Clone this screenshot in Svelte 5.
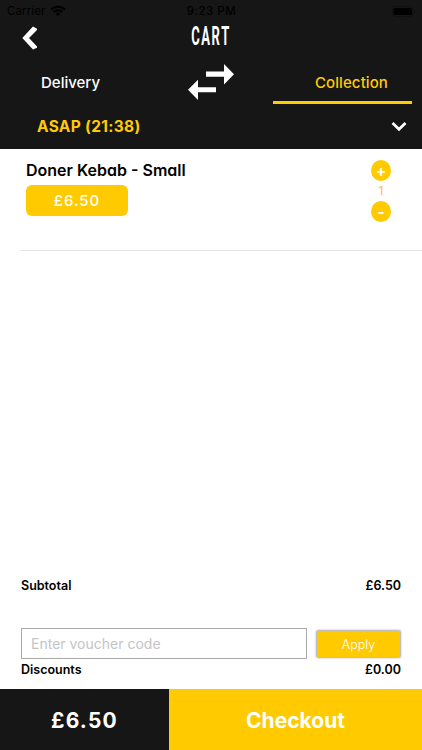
<script>
  let mode = 'collection'
  let voucher = ''
  let item = { title: 'Doner Kebab - Small', price: 6.5, quantity: 1 }

  function format(value) {
    return '£' + value.toFixed(2)
  }

  function remove() {
    if (item.quantity > 1) item.quantity -= 1
  }

  $: subtotal = item.price * item.quantity
</script>

<div class="screen">
  <header>
    <div class="status">
      <div class="carrier">
        <span>Carrier</span>
        <svg width="16" height="12" viewBox="0 0 16 12">
          <path d="M1 4.5a10 10 0 0 1 14 0M3.5 7a6.4 6.4 0 0 1 9 0" fill="none" stroke="#000" stroke-width="2" />
          <path d="M5.5 8.7a3.6 3.6 0 0 1 5 0L8 11.3z" />
        </svg>
      </div>
      <span class="time">9:23 PM</span>
      <svg class="battery" width="24" height="11" viewBox="0 0 24 11">
        <rect x=".5" y=".5" width="20.500" height="10" rx="3" fill="none" stroke="#101010" />
        <rect x="1.500" y="2" width="18.500" height="7" rx="1.500" />
        <path d="M22 3.500q1.500 2 0 4z" fill="#0b0b0b" />
      </svg>
    </div>

    <div class="title_bar">
      <button class="back" aria-label="Back">
        <svg width="16" height="24" viewBox="0 0 16 24">
          <path d="M11 .6L15 2.700V4L7 12L15 20.500V21.700L11 23.600L.3 12z" fill="#fff" />
        </svg>
      </button>
      <h1>CART</h1>
    </div>

    <div class="tabs">
      <button class="tab" class:active={mode == 'delivery'} on:click={() => mode = 'delivery'}>
        <span>Delivery</span>
      </button>
      <svg width="46" height="36" viewBox="0 0 46 36">
        <path d="M18 7.500h18V0l10 10.200L36 20.500v-7.700H18zM28 23.200H10v-7.500L0 25.700L10 36v-7.700h18z" fill="#fff" />
      </svg>
      <button class="tab right" class:active={mode == 'collection'} on:click={() => mode = 'collection'}>
        <span>Collection</span>
      </button>
    </div>

    <div class="slot">
      <span>ASAP (21:38)</span>
      <svg width="16" height="11" viewBox="0 0 16 11">
        <path d="M1.500 2L8 8.300L14.500 2" fill="none" stroke="#fff" stroke-width="2.700" />
      </svg>
    </div>
  </header>

  <main>
    <div class="item">
      <div>
        <div class="name">{item.title}</div>
        <div class="price">{format(item.price)}</div>
      </div>
      <div class="quantity">
        <button aria-label="Add" on:click={() => item.quantity += 1}>+</button>
        <span>{item.quantity}</span>
        <button aria-label="Remove" on:click={remove}>-</button>
      </div>
    </div>
  </main>

  <section class="summary">
    <div class="row"><span>Subtotal</span><span>{format(subtotal)}</span></div>
    <div class="voucher">
      <input placeholder="Enter voucher code" bind:value={voucher} />
      <button>Apply</button>
    </div>
    <div class="row"><span>Discounts</span><span>{format(0)}</span></div>
  </section>

  <footer>
    <div class="total">{format(subtotal)}</div>
    <button class="checkout">Checkout</button>
  </footer>
</div>

<style>
  :global(body) {
    margin: 0;
    background-color: #fff;
  }

  .screen {
    width: 100%;
    height: 750px;
    display: flex;
    flex-direction: column;
    font-family: Inter, Roboto, sans-serif;
    color: #000;
  }

  button {
    border: none;
    padding: 0;
    margin: 0;
    background: none;
    font-family: inherit;
    color: inherit;
  }

  svg {
    display: block;
  }

  header {
    height: 149px;
    background-color: #161616;
    color: #fff;
  }

  .status {
    height: 22px;
    display: grid;
    grid-template-columns: 1fr auto 1fr;
    align-items: center;
    padding: 0 6px 0 7px;
    box-sizing: border-box;
    font-size: 11.5px;
    color: #000;
  }

  .carrier {
    display: flex;
    align-items: center;
    gap: 5px;
    letter-spacing: 0.1px;
  }

  .status .time {
    font-weight: 500;
    letter-spacing: 0.5px;
  }

  .status .battery {
    justify-self: end;
  }

  .title_bar {
    height: 32px;
    display: grid;
    grid-template-columns: 1fr auto 1fr;
    padding: 0 22px;
  }

  .back {
    width: 16px;
    height: 28px;
    padding-top: 4px;
  }

  h1 {
    margin: 0;
    width: 38px;
    display: flex;
    justify-content: center;
    font-family: Roboto, sans-serif;
    font-size: 25px;
    font-weight: 700;
    line-height: 29px;
    letter-spacing: 3px;
    transform: scaleX(0.52);
  }

  .tabs {
    height: 50px;
    display: grid;
    grid-template-columns: 139px 46px 139px;
    justify-content: space-between;
    align-items: start;
    padding: 0 10px 0 10px;
  }

  .tabs svg {
    margin-top: 10px;
  }

  .tab {
    height: 50px;
    box-sizing: border-box;
    padding: 10px 24px 0 31px;
    border-bottom: 3px solid transparent;
    font-size: 15px;
    font-weight: 500;
    text-align: left;
  }

  .tab.right {
    text-align: right;
    letter-spacing: 0.1px;
  }

  .tab.active {
    color: #ffcb05;
    border-color: #ffcb05;
  }

  .slot {
    height: 45px;
    display: flex;
    justify-content: space-between;
    align-items: center;
    padding: 0 15px 0 37px;
    font-size: 15.5px;
    font-weight: 700;
    letter-spacing: 0.3px;
    color: #ffcb05;
  }

  main {
    flex: 1;
  }

  .item {
    height: 102px;
    box-sizing: border-box;
    margin-left: 21px;
    padding: 11px 31px 0 5px;
    display: flex;
    justify-content: space-between;
    border-bottom: 1px solid #e3e3e3;
  }

  .name {
    font-size: 16px;
    font-weight: 600;
    line-height: 21px;
    font-feature-settings: 'cv11';
  }

  .price {
    width: 102px;
    height: 31px;
    margin-top: 4px;
    border-radius: 6px;
    background-color: #ffca00;
    color: #fff;
    font-size: 15px;
    font-weight: 500;
    line-height: 31px;
    letter-spacing: 1px;
    text-align: center;
  }

  .quantity {
    display: flex;
    flex-direction: column;
    align-items: center;
    color: #ffb84d;
    font-size: 12px;
    font-weight: 400;
    line-height: 20px;
  }

  .quantity button {
    width: 20px;
    height: 21px;
    border-radius: 50%;
    background-color: #ffca00;
    color: #fff;
    font-size: 15px;
    font-weight: 700;
    line-height: 21px;
  }

  .summary {
    padding: 0 21px 10px;
  }

  .row {
    height: 20px;
    display: flex;
    justify-content: space-between;
    font-size: 12.5px;
    font-weight: 600;
    line-height: 21px;
  }

  .voucher {
    display: flex;
    align-items: flex-end;
    gap: 10px;
    margin-top: 33px;
  }

  .voucher input {
    flex: 1;
    min-width: 0;
    height: 31px;
    box-sizing: border-box;
    padding: 0 9px;
    border: 1px solid #aaa;
    border-radius: 0;
    background-color: #fff;
    font-family: inherit;
    font-size: 14px;
  }

  .voucher input::placeholder {
    color: #c4c4c6;
  }

  .voucher button {
    width: 83px;
    height: 26px;
    margin: 0 1px 2px 0;
    border-radius: 1px;
    background-color: #ffca00;
    box-shadow: 0 0 2px 1px #aaa;
    color: #fff;
    font-size: 12.5px;
    font-weight: 300;
  }

  footer {
    height: 61px;
    display: flex;
    color: #fff;
    font-size: 21px;
    font-weight: 700;
    line-height: 63px;
    text-align: center;
  }

  .total {
    width: 169px;
    height: 61px;
    background-color: #161616;
    letter-spacing: 1.2px;
  }

  .checkout {
    flex: 1;
    padding-top: 1px;
    background-color: #ffca00;
    font-size: 21px;
    font-weight: 700;
  }
</style>
